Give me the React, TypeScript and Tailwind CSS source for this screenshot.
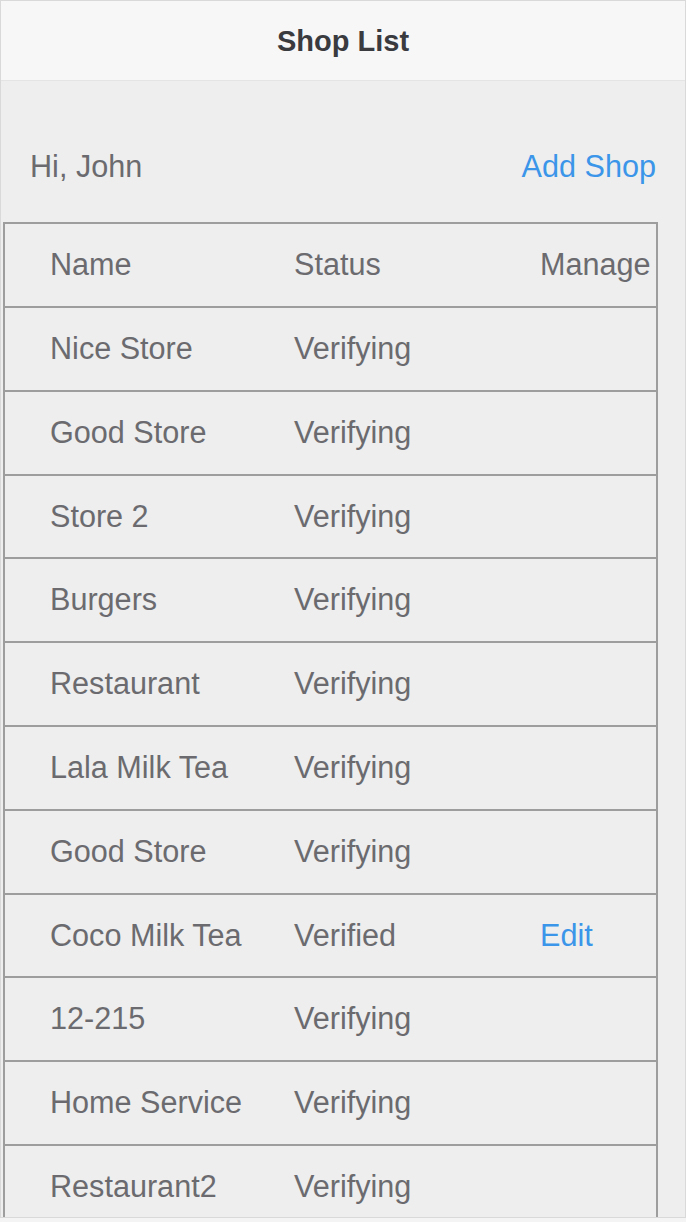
const shops: { name: string; status: string; editable?: boolean }[] = [
  { name: "Nice Store", status: "Verifying" },
  { name: "Good Store", status: "Verifying" },
  { name: "Store 2", status: "Verifying" },
  { name: "Burgers", status: "Verifying" },
  { name: "Restaurant", status: "Verifying" },
  { name: "Lala Milk Tea", status: "Verifying" },
  { name: "Good Store", status: "Verifying" },
  { name: "Coco Milk Tea", status: "Verified", editable: true },
  { name: "12-215", status: "Verifying" },
  { name: "Home Service", status: "Verifying" },
  { name: "Restaurant2", status: "Verifying" },
];

export default function App() {
  return (
    <div
      className="w-[686px] h-[1222px] bg-[#f4f4f4] text-[30.6px] text-[#6b6b6f]"
      style={{ fontFamily: '"Liberation Sans", Arial, sans-serif' }}
    >
      <div className="h-[1218px] border border-[#d9d9d9] bg-[#eeeeee] overflow-hidden">
        {/* top bar */}
        <header className="h-[80px] pt-[3px] bg-[#f7f7f7] border-b border-[#e4e4e4] flex items-center justify-center">
          <h1 className="text-[29px] font-bold text-[#3a3b3f]">Shop List</h1>
        </header>

        <div className="mt-[56px] h-[60px] pl-[29px] pr-[29px] flex items-center justify-between">
          <span>Hi, John</span>
          <a className="text-[#3b95e9]">Add Shop</a>
        </div>

        {/* table */}
        <div className="mt-[25px] ml-[2px] w-[655px] border-2 border-b-0 border-[#9d9d9d]">
          <div className="h-[84px] flex items-center border-b-2 border-[#9d9d9d]">
            <div className="w-[289px] pl-[45px]">Name</div>
            <div className="w-[246px]">Status</div>
            <div className="flex-1 whitespace-nowrap">Manage</div>
          </div>
          {shops.map((s, i) => (
            <div
              key={i}
              className="h-[83.8px] flex items-center border-b-2 border-[#9d9d9d]"
            >
              <div className="w-[289px] pl-[45px] whitespace-nowrap">{s.name}</div>
              <div className="w-[246px]">{s.status}</div>
              <div className="flex-1">
                {s.editable && <a className="text-[#3b95e9]">Edit</a>}
              </div>
            </div>
          ))}
        </div>
      </div>
    </div>
  );
}
